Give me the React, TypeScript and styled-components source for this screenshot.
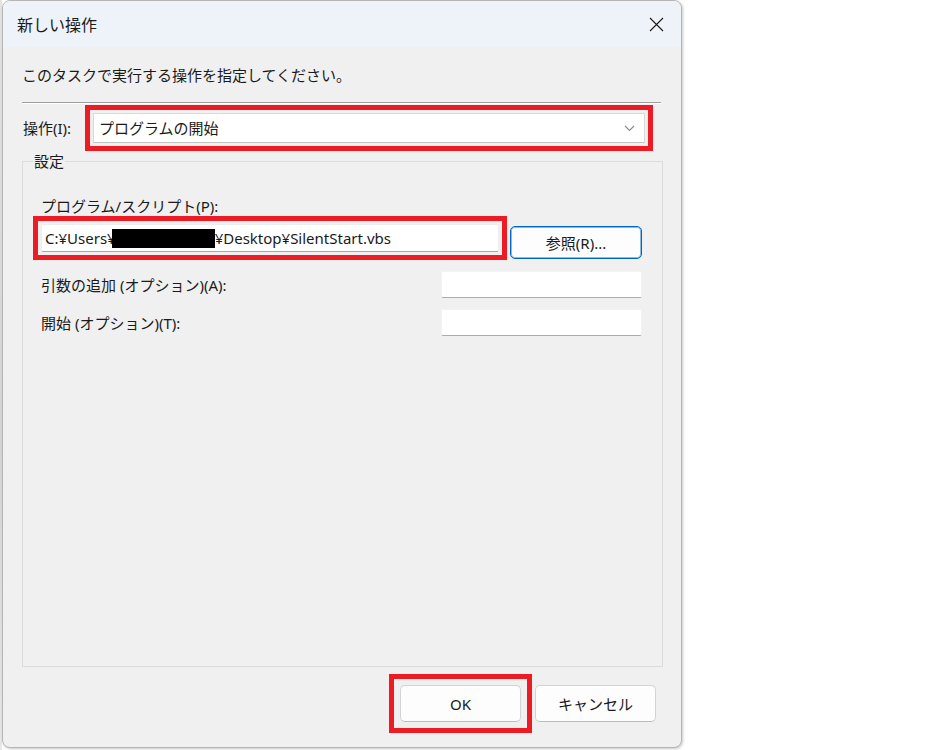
import React from 'react';
import styled, { createGlobalStyle } from 'styled-components';

const GlobalStyle = createGlobalStyle`
  * { box-sizing: border-box; }
  html, body {
    margin: 0;
    padding: 0;
    background: #ffffff;
  }
  body {
    font-family: "Noto Sans", "Noto Sans CJK JP", sans-serif;
    font-size: 15px;
    color: #1a1a1a;
  }
`;

export default function App() {
  return (
    <>
      <GlobalStyle />
      <Screen>
        <BackEdge />
        <Dialog>
          <TitleBar>
            <Title>新しい操作</Title>
            <CloseButton aria-label="閉じる">
              <svg width="15" height="15" viewBox="0 0 15 15">
                <path d="M1 1 L14 14 M14 1 L1 14" stroke="#1a1a1a" strokeWidth="1.1" fill="none" />
              </svg>
            </CloseButton>
          </TitleBar>

          <Body>
            <Instruction>このタスクで実行する操作を指定してください。</Instruction>
            <Separator />

            <ActionRow>
              <ActionLabel>操作(I):</ActionLabel>
              <Highlight $offset={3} $width="552px">
                <Combo>
                  <span>プログラムの開始</span>
                  <svg width="11" height="7" viewBox="0 0 11 7">
                    <path d="M1 1 L5.5 5.5 L10 1" stroke="#8c8c8c" strokeWidth="1.2" fill="none" />
                  </svg>
                </Combo>
              </Highlight>
            </ActionRow>

            <Group>
              <Legend>設定</Legend>
              <GroupBody>
                <FieldLabel>プログラム/スクリプト(P):</FieldLabel>
                <ProgramRow>
                  <Highlight $offset={3} $width="458px">
                    <TextField $height={28}>
                      C:¥Users¥<Redacted />¥Desktop¥SilentStart.vbs
                    </TextField>
                  </Highlight>
                  <Button $primary $width={132} $height={33}>参照(R)...</Button>
                </ProgramRow>

                <OptionRow $gap={12}>
                  <FieldLabel>引数の追加 (オプション)(A):</FieldLabel>
                  <SmallField />
                </OptionRow>
                <OptionRow $gap={11}>
                  <FieldLabel>開始 (オプション)(T):</FieldLabel>
                  <SmallField />
                </OptionRow>
              </GroupBody>
            </Group>
          </Body>

          <Footer>
            <Highlight $offset={6}>
              <Button $width={121} $height={37}>OK</Button>
            </Highlight>
            <Button $width={121} $height={37}>キャンセル</Button>
          </Footer>
        </Dialog>
      </Screen>
    </>
  );
}

const Screen = styled.div`
  display: flex;
  width: 941px;
  height: 750px;
`;

// sliver of the window behind the dialog
const BackEdge = styled.div`
  width: 2px;
  height: 100%;
  background: linear-gradient(#e4e4e4, #d6d6d6 60%, #e8e8e8);
`;

const Dialog = styled.div`
  width: 680px;
  height: 748px;
  display: flex;
  flex-direction: column;
  background: #f0f0f0;
  border: 1px solid #b6b6b6;
  border-radius: 8px;
  overflow: hidden;
  box-shadow: 1px 1px 3px rgba(0, 0, 0, 0.22);
`;

const TitleBar = styled.div`
  height: 46px;
  flex-shrink: 0;
  display: flex;
  align-items: center;
  justify-content: space-between;
  padding-left: 14px;
  background: #eef2f9;
`;

const Title = styled.div`
  font-family: "Noto Sans CJK JP", sans-serif;
  font-size: 16px;
  line-height: 24px;
  color: #1a1a1a;
`;

const CloseButton = styled.button`
  width: 50px;
  height: 100%;
  display: flex;
  align-items: center;
  justify-content: center;
  border: none;
  background: transparent;
  padding: 0;
`;

const Body = styled.div`
  flex: 1;
  display: flex;
  flex-direction: column;
  padding: 18px 18px 0 19px;
`;

const Instruction = styled.p`
  margin: 0;
  line-height: 20px;
`;

const Separator = styled.div`
  margin: 17px 2px 0 0;
  height: 2px;
  border-top: 1px solid #a0a0a0;
  border-bottom: 1px solid #ffffff;
`;

const ActionRow = styled.div`
  display: flex;
  align-items: center;
  margin-top: 9px;
`;

const ActionLabel = styled.span`
  width: 71px;
  padding-left: 1px;
  line-height: 20px;
`;

// red annotation frame drawn around a control
const Highlight = styled.div<{ $offset: number; $width?: string }>`
  display: flex;
  width: ${p => p.$width ?? 'auto'};
  outline: 5px solid #ed1c24;
  outline-offset: ${p => p.$offset}px;
`;

const Combo = styled.div`
  width: 100%;
  height: 30px;
  display: flex;
  align-items: center;
  justify-content: space-between;
  padding: 0 9px 0 5px;
  background: #ffffff;
  border: 1px solid #d9d9d9;
  border-bottom-color: #c4c4c4;
  line-height: 20px;
`;

const Group = styled.fieldset`
  flex: 1;
  margin: 8px 0 0 0;
  padding: 0;
  min-width: 0;
  border: 1px solid #dcdcdc;
`;

const Legend = styled.legend`
  margin-left: 10px;
  padding: 0 1px;
  line-height: 20px;
  font-size: 15px;
`;

const GroupBody = styled.div`
  display: flex;
  flex-direction: column;
  padding: 25px 20px 0 18px;
`;

const FieldLabel = styled.span`
  line-height: 20px;
  white-space: nowrap;
`;

const ProgramRow = styled.div`
  display: flex;
  align-items: flex-start;
  margin-top: 8px;
`;

const TextField = styled.div<{ $height: number }>`
  width: 100%;
  height: ${p => p.$height}px;
  display: flex;
  align-items: center;
  padding-left: 3px;
  background: #ffffff;
  border: 1px solid #ededed;
  border-bottom-color: #a8a8a8;
  border-radius: 2px;
  white-space: pre;
  line-height: 20px;
`;

const Redacted = styled.span`
  display: inline-block;
  width: 103px;
  height: 19px;
  margin-left: -4px;
  background: #000000;
`;

const OptionRow = styled.div<{ $gap: number }>`
  display: flex;
  align-items: center;
  justify-content: space-between;
  margin-top: ${p => p.$gap}px;
`;

const SmallField = styled.div`
  width: 201px;
  height: 27px;
  background: #ffffff;
  border: 1px solid #f3f3f3;
  border-bottom-color: #acacac;
  border-radius: 2px;
`;

const Button = styled.button<{ $primary?: boolean; $width: number; $height: number }>`
  width: ${p => p.$width}px;
  height: ${p => p.$height}px;
  flex-shrink: 0;
  margin: ${p => (p.$primary ? '2px 0 0 11px' : '0')};
  padding: 0;
  font-family: "Noto Sans", "Noto Sans CJK JP", sans-serif;
  font-size: 15px;
  color: #1a1a1a;
  background: #fdfdfd;
  border: 1px solid ${p => (p.$primary ? '#0067c0' : '#d3d3d3')};
  border-bottom-color: ${p => (p.$primary ? '#0067c0' : '#bcbcbc')};
  border-radius: 5px;
  box-shadow: ${p => (p.$primary ? 'inset 0 0 0 1px rgba(0, 103, 192, 0.45)' : 'none')};
`;

const Footer = styled.div`
  flex-shrink: 0;
  display: flex;
  justify-content: flex-end;
  gap: 14px;
  padding: 18px 25px 25px 0;
`;
